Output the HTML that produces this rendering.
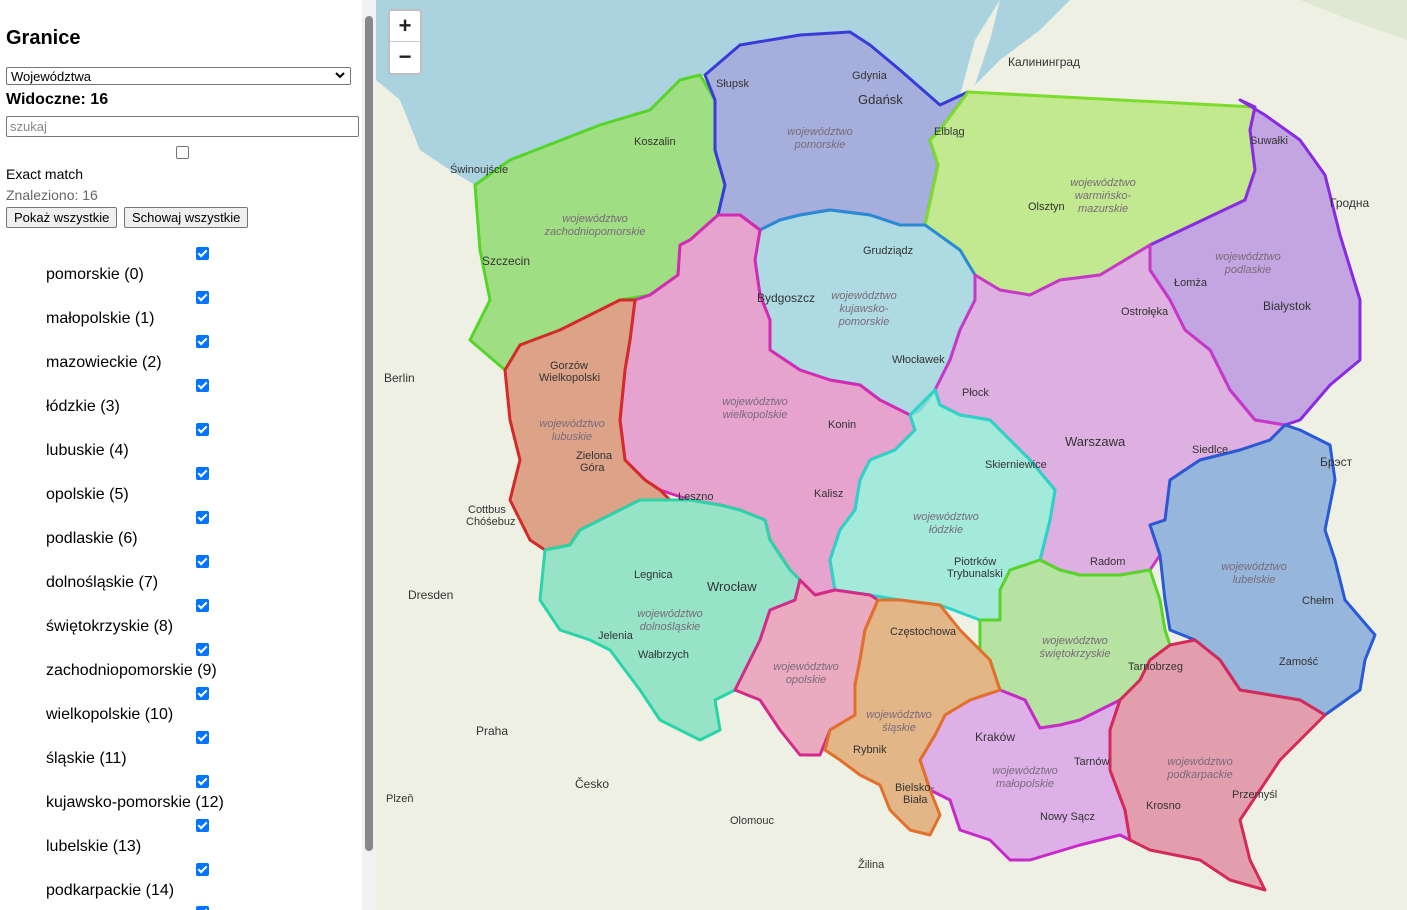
<!DOCTYPE html>
<html><head><meta charset="utf-8"><style>
body{margin:0;width:1407px;height:910px;overflow:hidden;font-family:"Liberation Sans",Arial,sans-serif;position:relative;background:#fff}
#side{position:absolute;left:0;top:0;width:362px;height:910px;background:#fff;overflow:hidden}
#sb{position:absolute;left:362px;top:0;width:14px;height:910px;background:#f1f1f1}
#sb div{position:absolute;left:3px;top:16px;width:8px;height:835px;background:#888;border-radius:4px}
h2{position:absolute;left:6px;top:27px;margin:0;font-size:20px;font-weight:bold}
.sel{position:absolute;left:6px;top:67px;height:18px;border:1px solid #767676;border-radius:2px;font-size:13px;line-height:17px;padding-left:4px;box-sizing:border-box;width:345px}
.sel svg{position:absolute;right:5px;top:4px}
.wid{position:absolute;left:6px;top:91px;font-size:16px;font-weight:bold}
.inp{position:absolute;left:6px;top:116px;width:353px;height:21px;border:1px solid #767676;border-radius:2px;box-sizing:border-box;font-size:13px;color:#888;padding-left:3px;line-height:19px}
.cb{position:absolute;width:12px;height:12px;box-sizing:border-box;border:1px solid #767676;border-radius:2px;background:#fff}
.cb.on{background:#0075ff;border-color:#0075ff}
.cb.on:after{content:"";position:absolute;left:3px;top:0px;width:3px;height:7px;border:solid #fff;border-width:0 2px 2px 0;transform:rotate(45deg)}
.t{position:absolute;font-size:14px}
.btn{position:absolute;top:207px;height:21px;border:1px solid #767676;border-radius:2px;background:#efefef;font-size:13px;line-height:19px;padding:0 7px;box-sizing:border-box}
.item{position:absolute;left:46px;font-size:16px}
#map{position:absolute;left:0;top:0}
.zoom{position:absolute;left:388px;top:9px;height:62px;background:#fff;border:2px solid rgba(0,0,0,.25);border-radius:4px;box-sizing:content-box;width:30px}
.zoom div{height:30px;text-align:center;font-size:22px;line-height:30px;font-weight:bold;color:#222}
.zoom div:first-child{border-bottom:1px solid #ccc}
</style></head><body>
<svg id="map" width="1407" height="910" viewBox="0 0 1407 910" font-family="Liberation Sans,Arial,sans-serif">
<rect x="0" y="0" width="1407" height="910" fill="#eef0e3"/>
<path d="M376,0 L1000,0 975,40 960,95 940,105 900,70 870,45 850,32 800,35 740,45 705,75 680,80 650,110 600,125 510,160 475,185 450,170 420,150 400,100 376,80Z" fill="#aad3df"/>
<path d="M1000,0 L1070,0 1040,30 1000,60 975,85 990,40Z" fill="#aad3df"/>
<path d="M1300,0 L1407,0 1407,40 1350,20Z" fill="#dfe8d3"/>
<g stroke-width="3" stroke-linejoin="round">
<path fill="#7fd65a" fill-opacity=".7" stroke="#55d42a" d="M475,185 510,160 600,125 650,110 680,80 700,75 715,100 715,150 725,185 718,215 690,240 680,245 678,275 650,295 620,300 580,320 560,330 520,345 505,370 470,340 490,300 480,250Z"/>
<path fill="#8d98d8" fill-opacity=".75" stroke="#3a3ad8" d="M705,75 740,45 800,35 850,32 870,45 900,70 940,105 968,92 940,130 930,140 938,165 925,225 900,225 870,215 830,210 800,215 780,220 760,230 740,215 718,215 725,185 715,150 715,100Z"/>
<path fill="#b6e67a" fill-opacity=".8" stroke="#7bdc2c" d="M968,92 1255,107 1250,130 1255,170 1245,200 1150,245 1100,275 1060,280 1030,295 1000,290 975,275 960,250 925,225 938,165 930,140 940,130Z"/>
<path fill="#b48ce0" fill-opacity=".75" stroke="#8a2be2" d="M1255,107 1240,100 1265,115 1300,140 1325,175 1340,235 1360,300 1360,360 1330,385 1300,420 1285,425 1255,420 1230,390 1210,350 1185,330 1170,300 1150,270 1150,245 1245,200 1255,170 1250,130Z"/>
<path fill="#9dd4e0" fill-opacity=".8" stroke="#2a8ad4" d="M760,230 780,220 800,215 830,210 870,215 900,225 925,225 960,250 975,275 975,300 960,330 950,360 935,390 920,410 910,415 880,400 860,385 830,380 800,370 770,350 770,320 760,295 755,260Z"/>
<path fill="#d89ae0" fill-opacity=".75" stroke="#c838c8" d="M975,275 1000,290 1030,295 1060,280 1100,275 1150,245 1150,270 1170,300 1185,330 1210,350 1230,390 1255,420 1285,425 1270,440 1240,450 1200,460 1170,480 1165,520 1150,525 1160,555 1150,570 1120,575 1080,575 1060,570 1040,560 1050,520 1055,490 1030,460 1010,440 990,420 960,415 940,405 935,390 950,360 960,330 975,300Z"/>
<path fill="#7fa8d8" fill-opacity=".8" stroke="#2a5ad4" d="M1285,425 1300,430 1330,445 1335,480 1325,530 1335,560 1345,600 1375,635 1365,660 1360,690 1325,715 1300,700 1240,690 1220,660 1195,640 1170,630 1165,600 1160,555 1150,525 1165,520 1170,480 1200,460 1240,450 1270,440Z"/>
<path fill="#e290c8" fill-opacity=".8" stroke="#d42ab4" d="M678,275 680,245 690,240 718,215 740,215 760,230 755,260 760,295 770,320 770,350 800,370 830,380 860,385 880,400 910,415 915,430 895,450 870,460 860,480 855,510 840,530 830,560 835,590 815,595 800,580 790,570 780,555 770,540 765,520 740,510 720,505 690,500 660,490 645,480 625,460 620,420 625,370 630,340 635,300 650,295Z"/>
<path fill="#d89070" fill-opacity=".8" stroke="#d42a2a" d="M505,370 520,345 560,330 580,320 620,300 635,300 630,340 625,370 620,420 625,460 645,480 660,490 670,500 640,500 620,510 600,520 580,530 570,545 545,550 530,540 510,500 520,460 510,420Z"/>
<path fill="#80e0c0" fill-opacity=".8" stroke="#2ad4a8" d="M545,550 570,545 580,530 600,520 620,510 640,500 670,500 690,500 720,505 740,510 765,520 770,540 780,555 790,570 800,580 795,600 770,610 760,640 750,660 735,690 715,700 720,730 700,740 680,730 660,720 640,690 610,650 590,640 560,630 540,600Z"/>
<path fill="#90e8d8" fill-opacity=".8" stroke="#2ad4c8" d="M910,415 935,390 940,405 960,415 990,420 1010,440 1030,460 1055,490 1050,520 1040,560 1010,570 1000,590 1000,620 980,620 940,605 900,600 870,595 835,590 830,560 840,530 855,510 860,480 870,460 895,450 915,430Z"/>
<path fill="#e89ab8" fill-opacity=".8" stroke="#d42a8a" d="M800,580 815,595 835,590 870,595 878,600 865,630 860,660 855,685 855,715 830,730 820,755 800,755 780,730 760,700 735,690 750,660 760,640 770,610 795,600Z"/>
<path fill="#a8e090" fill-opacity=".8" stroke="#58d42a" d="M980,620 1000,620 1000,590 1010,570 1040,560 1060,570 1080,575 1120,575 1150,570 1160,600 1165,630 1170,645 1150,660 1140,680 1120,700 1100,710 1080,720 1060,725 1040,728 1025,700 1000,690 990,660 980,650Z"/>
<path fill="#d8a0e8" fill-opacity=".8" stroke="#c82ac8" d="M945,715 970,700 1000,690 1025,700 1040,728 1060,725 1080,720 1100,710 1120,700 1110,730 1110,770 1125,810 1130,840 1120,835 1080,845 1030,860 1010,860 990,840 960,830 950,800 930,790 920,760 935,735Z"/>
<path fill="#e08aa0" fill-opacity=".8" stroke="#d42a5a" d="M1120,700 1140,680 1150,660 1170,645 1195,640 1220,660 1240,690 1300,700 1325,715 1300,740 1280,760 1260,790 1240,820 1250,860 1265,890 1230,880 1200,860 1150,850 1130,840 1125,810 1110,770 1110,730Z"/>
<path fill="#e0a870" fill-opacity=".8" stroke="#e0702a" d="M878,600 900,600 940,605 960,630 980,650 990,660 1000,690 970,700 945,715 935,735 920,760 930,790 940,815 930,835 910,830 890,810 880,785 860,775 840,760 825,750 830,730 855,715 855,685 860,660 865,630Z"/>
</g>
<g font-size="11" fill="#333">
<text x="716" y="87">Słupsk</text><text x="852" y="79">Gdynia</text><text x="858" y="104" font-size="13">Gdańsk</text>
<text x="934" y="135">Elbląg</text><text x="1008" y="66" font-size="12">Калининград</text><text x="1028" y="210">Olsztyn</text>
<text x="1250" y="144">Suwałki</text><text x="1330" y="207" font-size="12">Гродна</text><text x="1174" y="286">Łomża</text>
<text x="1263" y="310" font-size="12">Białystok</text><text x="1121" y="315">Ostrołęka</text><text x="634" y="145">Koszalin</text>
<text x="450" y="173">Świnoujście</text><text x="482" y="265" font-size="12">Szczecin</text><text x="863" y="254">Grudziądz</text>
<text x="757" y="302" font-size="12">Bydgoszcz</text><text x="892" y="363">Włocławek</text><text x="962" y="396">Płock</text>
<text x="1065" y="446" font-size="13">Warszawa</text><text x="1192" y="453">Siedlce</text><text x="1320" y="466" font-size="12">Брэст</text>
<text x="550" y="369">Gorzów</text><text x="539" y="381">Wielkopolski</text><text x="828" y="428">Konin</text>
<text x="384" y="382" font-size="12">Berlin</text><text x="576" y="459">Zielona</text><text x="580" y="471">Góra</text>
<text x="985" y="468">Skierniewice</text><text x="814" y="497">Kalisz</text><text x="678" y="500">Leszno</text>
<text x="468" y="513">Cottbus</text><text x="466" y="525">Chóśebuz</text><text x="1090" y="565">Radom</text>
<text x="408" y="599" font-size="12">Dresden</text><text x="634" y="578">Legnica</text><text x="707" y="591" font-size="13">Wrocław</text>
<text x="1302" y="604">Chełm</text><text x="954" y="565">Piotrków</text><text x="947" y="577">Trybunalski</text>
<text x="890" y="635">Częstochowa</text><text x="598" y="639">Jelenia</text><text x="638" y="658">Wałbrzych</text>
<text x="1279" y="665">Zamość</text><text x="1128" y="670">Tarnobrzeg</text><text x="476" y="735" font-size="12">Praha</text>
<text x="975" y="741" font-size="12">Kraków</text><text x="853" y="753">Rybnik</text><text x="1074" y="765">Tarnów</text>
<text x="575" y="788" font-size="12">Česko</text><text x="1232" y="798">Przemyśl</text><text x="895" y="791">Bielsko-</text>
<text x="903" y="803">Biała</text><text x="1146" y="809">Krosno</text><text x="386" y="802">Plzeň</text>
<text x="730" y="824">Olomouc</text><text x="1040" y="820">Nowy Sącz</text><text x="858" y="868">Žilina</text>
</g>
<g font-size="11" fill="#7a6a7a" font-style="italic" text-anchor="middle">
<text x="820" y="135">województwo</text><text x="820" y="148">pomorskie</text>
<text x="1103" y="186">województwo</text><text x="1103" y="199">warmińsko-</text><text x="1103" y="212">mazurskie</text>
<text x="595" y="222">województwo</text><text x="595" y="235">zachodniopomorskie</text>
<text x="1248" y="260">województwo</text><text x="1248" y="273">podlaskie</text>
<text x="864" y="299">województwo</text><text x="864" y="312">kujawsko-</text><text x="864" y="325">pomorskie</text>
<text x="755" y="405">województwo</text><text x="755" y="418">wielkopolskie</text>
<text x="572" y="427">województwo</text><text x="572" y="440">lubuskie</text>
<text x="946" y="520">województwo</text><text x="946" y="533">łódzkie</text>
<text x="1254" y="570">województwo</text><text x="1254" y="583">lubelskie</text>
<text x="670" y="617">województwo</text><text x="670" y="630">dolnośląskie</text>
<text x="1075" y="644">województwo</text><text x="1075" y="657">świętokrzyskie</text>
<text x="806" y="670">województwo</text><text x="806" y="683">opolskie</text>
<text x="899" y="718">województwo</text><text x="899" y="731">śląskie</text>
<text x="1025" y="774">województwo</text><text x="1025" y="787">małopolskie</text>
<text x="1200" y="765">województwo</text><text x="1200" y="778">podkarpackie</text>
</g>
</svg>
<div class="zoom"><div>+</div><div>−</div></div>
<div id="side">
<h2>Granice</h2>
<div class="sel">Województwa<svg width="10" height="7" viewBox="0 0 10 7"><path d="M1,1 5,5 9,1" fill="none" stroke="#000" stroke-width="2"/></svg></div>
<div class="wid">Widoczne: 16</div>
<div class="inp">szukaj</div>
<div class="cb" style="left:176px;top:146px;width:13px;height:13px"></div>
<div class="t" style="left:6px;top:166px">Exact match</div>
<div class="t" style="left:6px;top:187px;color:#666">Znaleziono: 16</div>
<div class="btn" style="left:6px">Pokaż wszystkie</div>
<div class="btn" style="left:124px">Schowaj wszystkie</div>
<div class="cb on" style="left:196px;top:247px;width:13px;height:13px"></div><div class="item" style="top:266px">pomorskie (0)</div>
<div class="cb on" style="left:196px;top:291px;width:13px;height:13px"></div><div class="item" style="top:310px">małopolskie (1)</div>
<div class="cb on" style="left:196px;top:335px;width:13px;height:13px"></div><div class="item" style="top:354px">mazowieckie (2)</div>
<div class="cb on" style="left:196px;top:379px;width:13px;height:13px"></div><div class="item" style="top:398px">łódzkie (3)</div>
<div class="cb on" style="left:196px;top:423px;width:13px;height:13px"></div><div class="item" style="top:442px">lubuskie (4)</div>
<div class="cb on" style="left:196px;top:467px;width:13px;height:13px"></div><div class="item" style="top:486px">opolskie (5)</div>
<div class="cb on" style="left:196px;top:511px;width:13px;height:13px"></div><div class="item" style="top:530px">podlaskie (6)</div>
<div class="cb on" style="left:196px;top:555px;width:13px;height:13px"></div><div class="item" style="top:574px">dolnośląskie (7)</div>
<div class="cb on" style="left:196px;top:599px;width:13px;height:13px"></div><div class="item" style="top:618px">świętokrzyskie (8)</div>
<div class="cb on" style="left:196px;top:643px;width:13px;height:13px"></div><div class="item" style="top:662px">zachodniopomorskie (9)</div>
<div class="cb on" style="left:196px;top:687px;width:13px;height:13px"></div><div class="item" style="top:706px">wielkopolskie (10)</div>
<div class="cb on" style="left:196px;top:731px;width:13px;height:13px"></div><div class="item" style="top:750px">śląskie (11)</div>
<div class="cb on" style="left:196px;top:775px;width:13px;height:13px"></div><div class="item" style="top:794px">kujawsko-pomorskie (12)</div>
<div class="cb on" style="left:196px;top:819px;width:13px;height:13px"></div><div class="item" style="top:838px">lubelskie (13)</div>
<div class="cb on" style="left:196px;top:863px;width:13px;height:13px"></div><div class="item" style="top:882px">podkarpackie (14)</div>
<div class="cb on" style="left:196px;top:906px;width:13px;height:13px"></div>
</div>
<div id="sb"><div></div></div>
</body></html>
